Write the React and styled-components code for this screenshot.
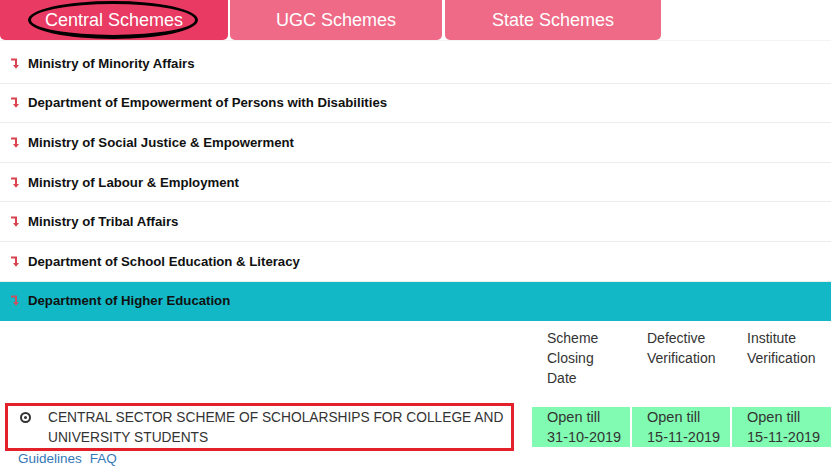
import styled, { createGlobalStyle } from 'styled-components';

const GlobalStyle = createGlobalStyle`
  html, body {
    margin: 0;
    padding: 0;
    background: #ffffff;
    font-family: "Liberation Sans", Arial, sans-serif;
    color: #333333;
  }
`;

// === Tabs ===
const TabBar = styled.nav`
  display: flex;
  gap: 2px;
  height: 40px;
  overflow: hidden;
`;

const Tab = styled.div`
  position: relative;
  width: ${(p) => p.$width}px;
  margin-top: -4px;
  height: 44px;
  padding-top: 4px;
  box-sizing: border-box;
  display: flex;
  align-items: center;
  justify-content: center;
  border-radius: 5px;
  background: ${(p) => (p.$active ? '#e83a62' : '#ee6a87')};
  color: #ffffff;
  font-size: 18px;
  margin-left: ${(p) => p.$offset || 0}px;
`;

const Circled = styled.span`
  position: absolute;
  left: 28px;
  top: 5px;
  width: 170px;
  height: 38px;
  box-sizing: border-box;
  border: 3px solid #000000;
  border-bottom-width: 4px;
  border-radius: 50%;
  pointer-events: none;
`;

// === Ministry list ===
const List = styled.ul`
  list-style: none;
  margin: 0;
  padding: 3px 0 0;
  border-top: 1px solid #f4f4f4;
`;

const Row = styled.li`
  display: flex;
  align-items: center;
  gap: 8px;
  height: 39.6px;
  box-sizing: border-box;
  padding-left: 10px;
  border-bottom: 1px solid ${(p) => (p.$active ? '#12b8c6' : '#ececec')};
  background: ${(p) => (p.$active ? '#12b8c6' : '#ffffff')};
  font-size: 13.2px;
  font-weight: 700;
  color: #111111;
`;

const Arrow = ({ muted }) => (
  <svg width="10" height="11" viewBox="0 0 10 11" aria-hidden="true">
    <polyline
      points="1,1.6 6,1.6 6,7.5"
      fill="none"
      stroke={muted ? '#c8525e' : '#d8434f'}
      strokeWidth="2"
    />
    <polygon points="3,7 9,7 6,10.8" fill={muted ? '#c8525e' : '#d8434f'} />
  </svg>
);

// === Scheme table ===
const Table = styled.section`
  display: grid;
  grid-template-columns: 530px 98px 98px 1fr;
  column-gap: 2px;
  font-size: 14px;
  line-height: 20px;
`;

const HeadCell = styled.div`
  padding: 7px 15px 15px;
  color: #333333;
`;

const SchemeCell = styled.div`
  display: flex;
  align-items: center;
`;

const Highlight = styled.div`
  margin-left: 5px;
  width: 509px;
  height: 48px;
  box-sizing: border-box;
  border: 3px solid #e3212b;
  display: flex;
  align-items: flex-start;
  padding: 2px 4px 0 12px;
  gap: 17px;
  font-size: 13.75px;
  color: #333333;
`;

const Radio = styled.span`
  flex: none;
  width: 11px;
  height: 11px;
  margin-top: 4px;
  box-sizing: border-box;
  border: 2px solid #333333;
  border-radius: 50%;
  display: flex;
  align-items: center;
  justify-content: center;

  &::after {
    content: '';
    width: 3px;
    height: 3px;
    border-radius: 50%;
    background: #333333;
  }
`;

const DateCell = styled.div`
  align-self: center;
  background: #80fbb1;
  padding: 0 0 0 15px;
  height: 40px;
  font-size: 14.5px;
  color: #333333;
`;

const DateLine = styled.div`
  white-space: nowrap;
`;

const Links = styled.div`
  display: flex;
  gap: 8px;
  padding-left: 18px;
  font-size: 13.5px;
  line-height: 16px;
`;

const LinkText = styled.a`
  color: #3379b7;
  text-decoration: none;
`;

const ministries = [
  'Ministry of Minority Affairs',
  'Department of Empowerment of Persons with Disabilities',
  'Ministry of Social Justice & Empowerment',
  'Ministry of Labour & Employment',
  'Ministry of Tribal Affairs',
  'Department of School Education & Literacy',
  'Department of Higher Education',
];

const dates = ['31-10-2019', '15-11-2019', '15-11-2019'];

export default function App() {
  return (
    <>
      <GlobalStyle />
      <TabBar>
        <Tab $active $width={228}>
          Central Schemes
          <Circled />
        </Tab>
        <Tab $width={212}>UGC Schemes</Tab>
        <Tab $width={216} $offset={1}>State Schemes</Tab>
      </TabBar>

      <List>
        {ministries.map((name, i) => {
          const active = i === ministries.length - 1;
          return (
            <Row key={name} $active={active}>
              <Arrow muted={active} />
              {name}
            </Row>
          );
        })}
      </List>

      <Table>
        <div />
        <HeadCell>Scheme Closing Date</HeadCell>
        <HeadCell>Defective Verification</HeadCell>
        <HeadCell>Institute Verification</HeadCell>

        <SchemeCell>
          <Highlight>
            <Radio />
            <span>CENTRAL SECTOR SCHEME OF SCHOLARSHIPS FOR COLLEGE AND UNIVERSITY STUDENTS</span>
          </Highlight>
        </SchemeCell>
        {dates.map((d, i) => (
          <DateCell key={i}>
            <DateLine>Open till</DateLine>
            <DateLine>{d}</DateLine>
          </DateCell>
        ))}
      </Table>

      <Links>
        <LinkText href="#">Guidelines</LinkText>
        <LinkText href="#">FAQ</LinkText>
      </Links>
    </>
  );
}
